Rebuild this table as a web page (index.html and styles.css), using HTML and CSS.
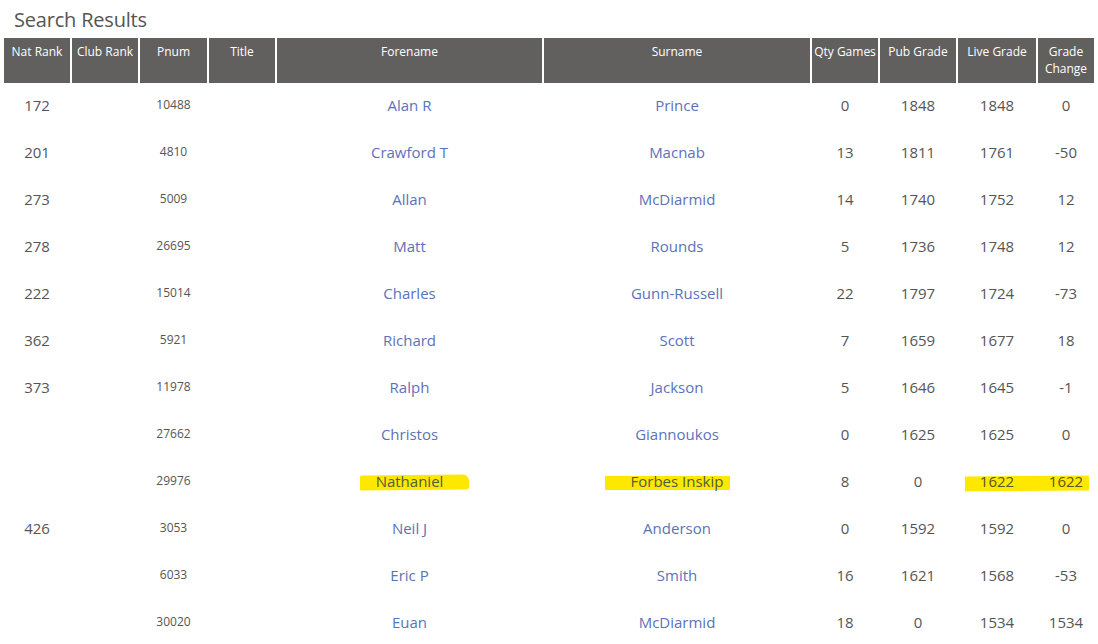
FILE: index.html
```html
<!DOCTYPE html>
<html lang="en">
<head>
<meta charset="utf-8">
<title>Search Results</title>
<link rel="stylesheet" href="styles.css">
</head>
<body>
<div class="page">
  <h2 class="title">Search Results</h2>
  <table class="results">
    <colgroup>
      <col class="c-nat"><col class="c-club"><col class="c-pnum"><col class="c-title">
      <col class="c-fore"><col class="c-sur"><col class="c-qty"><col class="c-pub">
      <col class="c-live"><col class="c-chg">
    </colgroup>
    <thead>
      <tr>
        <th>Nat Rank</th><th>Club Rank</th><th>Pnum</th><th>Title</th>
        <th>Forename</th><th>Surname</th><th>Qty Games</th><th>Pub Grade</th>
        <th>Live Grade</th><th>Grade Change</th>
      </tr>
    </thead>
    <tbody>
      <tr><td>172</td><td></td><td class="pn">10488</td><td></td><td><a href="#">Alan R</a></td><td><a href="#">Prince</a></td><td>0</td><td>1848</td><td>1848</td><td>0</td></tr>
      <tr><td>201</td><td></td><td class="pn">4810</td><td></td><td><a href="#">Crawford T</a></td><td><a href="#">Macnab</a></td><td>13</td><td>1811</td><td>1761</td><td>-50</td></tr>
      <tr><td>273</td><td></td><td class="pn">5009</td><td></td><td><a href="#">Allan</a></td><td><a href="#">McDiarmid</a></td><td>14</td><td>1740</td><td>1752</td><td>12</td></tr>
      <tr><td>278</td><td></td><td class="pn">26695</td><td></td><td><a href="#">Matt</a></td><td><a href="#">Rounds</a></td><td>5</td><td>1736</td><td>1748</td><td>12</td></tr>
      <tr><td>222</td><td></td><td class="pn">15014</td><td></td><td><a href="#">Charles</a></td><td><a href="#">Gunn-Russell</a></td><td>22</td><td>1797</td><td>1724</td><td>-73</td></tr>
      <tr><td>362</td><td></td><td class="pn">5921</td><td></td><td><a href="#">Richard</a></td><td><a href="#">Scott</a></td><td>7</td><td>1659</td><td>1677</td><td>18</td></tr>
      <tr><td>373</td><td></td><td class="pn">11978</td><td></td><td><a href="#">Ralph</a></td><td><a href="#">Jackson</a></td><td>5</td><td>1646</td><td>1645</td><td>-1</td></tr>
      <tr><td></td><td></td><td class="pn">27662</td><td></td><td><a href="#">Christos</a></td><td><a href="#">Giannoukos</a></td><td>0</td><td>1625</td><td>1625</td><td>0</td></tr>
      <tr class="marked"><td></td><td></td><td class="pn">29976</td><td></td><td><a href="#" class="hl hl-fore">Nathaniel</a></td><td><a href="#" class="hl hl-sur">Forbes Inskip</a></td><td>8</td><td>0</td><td><span class="hl hl-live">1622</span></td><td><span class="hl-txt">1622</span></td></tr>
      <tr><td>426</td><td></td><td class="pn">3053</td><td></td><td><a href="#">Neil J</a></td><td><a href="#">Anderson</a></td><td>0</td><td>1592</td><td>1592</td><td>0</td></tr>
      <tr><td></td><td></td><td class="pn">6033</td><td></td><td><a href="#">Eric P</a></td><td><a href="#">Smith</a></td><td>16</td><td>1621</td><td>1568</td><td>-53</td></tr>
      <tr><td></td><td></td><td class="pn">30020</td><td></td><td><a href="#">Euan</a></td><td><a href="#">McDiarmid</a></td><td>18</td><td>0</td><td>1534</td><td>1534</td></tr>
    </tbody>
  </table>
</div>
</body>
</html>
```

FILE: styles.css
```css
* { box-sizing: border-box; }

html, body {
  margin: 0;
  padding: 0;
  background: #ffffff;
}

body {
  font-family: "Open Sans", "Noto Sans", sans-serif;
  color: #555555;
  overflow: hidden;
}

.page {
  padding: 8px 0 0 2px;
}

.title {
  margin: 0 0 4px 12px;
  font-size: 20px;
  line-height: 24px;
  font-weight: 400;
  color: #555555;
  letter-spacing: -0.2px;
}

.results {
  table-layout: fixed;
  width: 1094px;
  border-collapse: separate;
  border-spacing: 2px;
}

.c-nat { width: 66px; }
.c-club { width: 66px; }
.c-pnum { width: 67px; }
.c-title { width: 66px; }
.c-fore { width: 265px; }
.c-sur { width: 266px; }
.c-qty { width: 66px; }
.c-pub { width: 76px; }
.c-live { width: 78px; }
.c-chg { width: 56px; }

.results th {
  background: #625f5f;
  color: #ffffff;
  font-size: 12px;
  font-weight: 400;
  line-height: 17px;
  height: 45px;
  padding: 5px 1px 0;
  vertical-align: top;
  text-align: center;
}

.results td {
  height: 45px;
  padding: 10px 0 0;
  vertical-align: top;
  text-align: center;
  font-size: 15px;
  line-height: 20px;
  color: #555555;
  white-space: nowrap;
}

.results td.pn {
  font-size: 12px;
  line-height: 20px;
}

.results a {
  color: #5b72b9;
  text-decoration: none;
}

.hl {
  position: relative;
  z-index: 0;
  display: inline-block;
}

.hl::before {
  content: "";
  position: absolute;
  z-index: -1;
  background: #ffe800;
  top: 4px;
  bottom: 1px;
}

.hl-fore::before {
  left: -16px;
  right: -25px;
  border-radius: 2px 6px 3px 1px;
  transform: rotate(-0.6deg);
}

.hl-sur::before {
  left: -26px;
  right: -7px;
  top: 5px;
}

.hl-live::before {
  left: -15px;
  right: -75px;
  top: 5px;
  bottom: 0;
  transform: rotate(-0.4deg);
}

.hl-txt {
  position: relative;
  z-index: 1;
  display: inline-block;
}

.marked .hl,
.marked .hl-txt {
  color: #55561f;
}

.marked a.hl {
  color: #4e5e3c;
}
```
